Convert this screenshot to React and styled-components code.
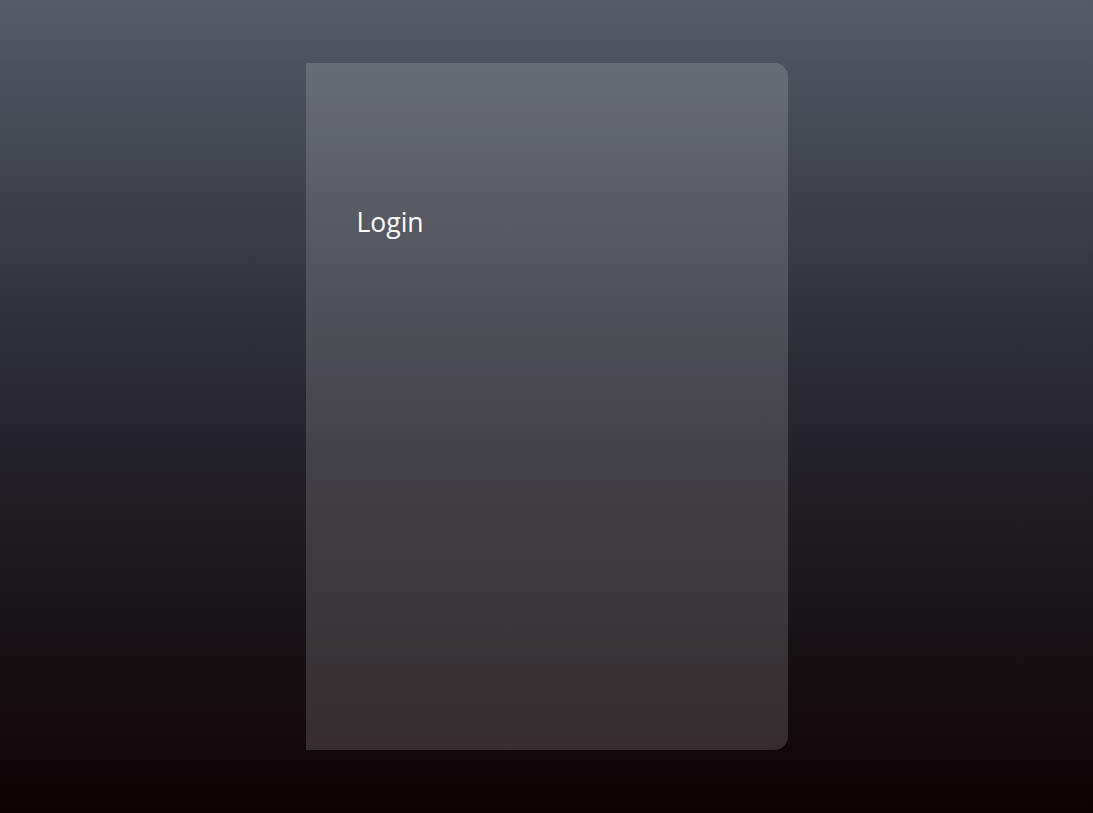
import React from "react";
import styled, { createGlobalStyle } from "styled-components";

const GlobalStyle = createGlobalStyle`
  html, body {
    margin: 0;
    padding: 0;
    height: 100%;
  }
  body {
    font-family: "Open Sans", "Noto Sans", sans-serif;
  }
  #root {
    height: 100%;
  }
`;

const Page = styled.main`
  box-sizing: border-box;
  height: 100vh;
  padding: 63px 0;
  display: flex;
  justify-content: center;
  background: linear-gradient(
    to bottom,
    #545b67 0%,
    #444853 18%,
    #32333d 37%,
    #24222a 55%,
    #1a1519 74%,
    #0e0305 100%
  );
`;

const Card = styled.section`
  box-sizing: border-box;
  width: 482px;
  height: 100%;
  padding: 142px 50px 0 51px;
  background: rgba(255, 255, 255, 0.15);
  border-radius: 0 14px 14px 0;
`;

const Title = styled.h1`
  margin: 0;
  font-size: 26.5px;
  font-weight: 400;
  color: #ffffff;
  line-height: 1.3;
`;

const App = () => {
  return (
    <>
      <GlobalStyle />
      <Page>
        <Card>
          <Title>Login</Title>
        </Card>
      </Page>
    </>
  );
};

export default App;
